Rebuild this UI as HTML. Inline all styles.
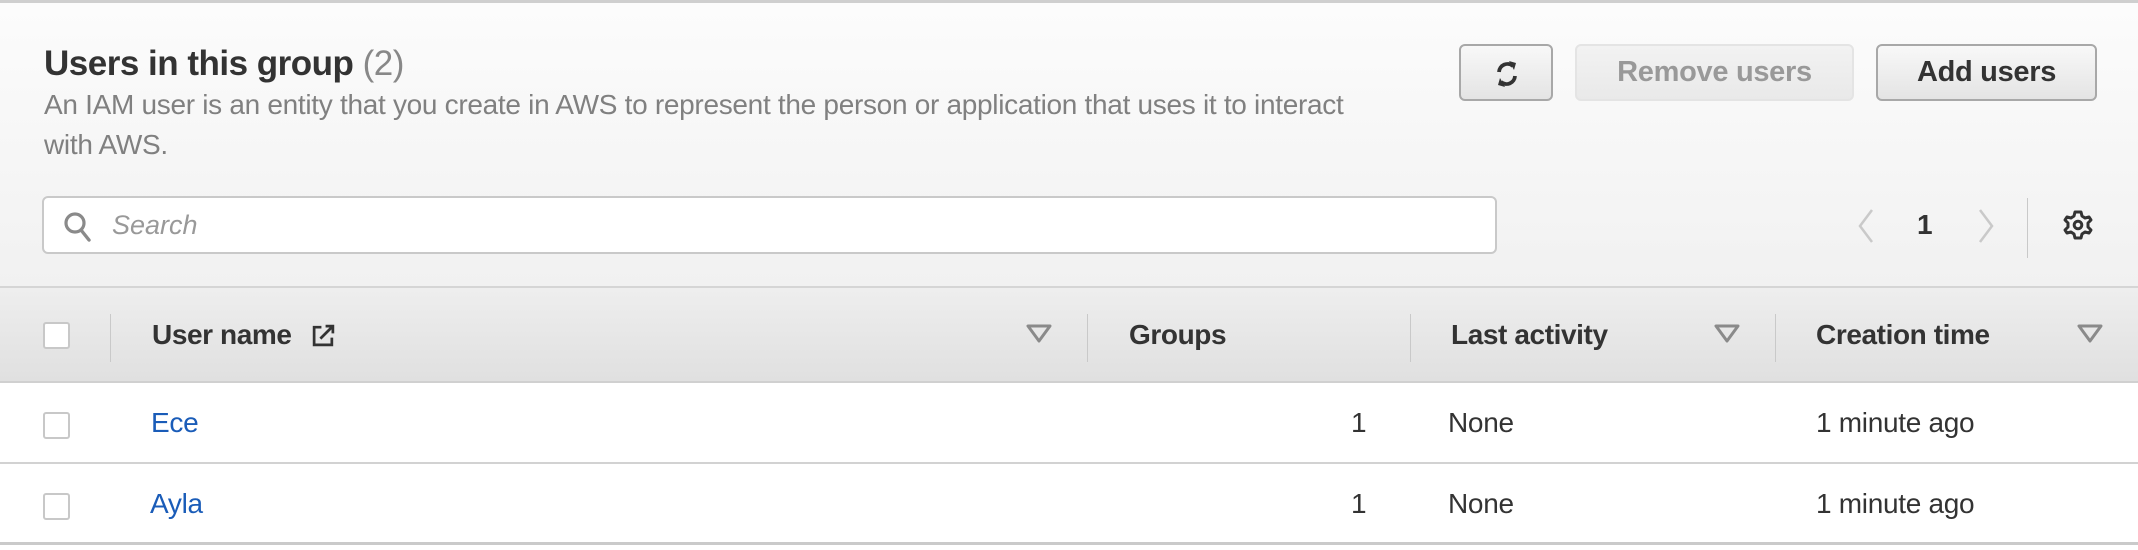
<!DOCTYPE html>
<html><head><meta charset="utf-8"><style>
*{box-sizing:border-box;margin:0;padding:0}
body{width:2138px;height:550px;overflow:hidden;font-family:"Liberation Sans",Arial,sans-serif;background:#fff;position:relative}
.top{position:absolute;left:0;top:0;width:2138px;height:286px;background:linear-gradient(#fcfcfc,#f1f1f1);border-top:3px solid #cfcfcf}
.abs{position:absolute}
h1{position:absolute;left:44px;top:44px;font-size:35px;font-weight:bold;color:#333;letter-spacing:-0.5px}
h1 span{font-weight:normal;color:#888}
.desc{position:absolute;left:44px;top:85px;width:1400px;font-size:28px;line-height:40px;color:#808080;letter-spacing:-0.3px}
.search{position:absolute;left:42px;top:196px;width:1455px;height:58px;background:#fff;border:2px solid #c9c9c9;border-radius:6px}
.search i{position:absolute;left:68px;top:12px;font-size:27px;color:#999;font-style:italic}
.btn{position:absolute;top:44px;height:57px;border:2px solid #a8a8a8;border-radius:6px;background:linear-gradient(#f8f8f8,#e4e4e4);font-size:29px;font-weight:bold;color:#333;text-align:center;line-height:53px;letter-spacing:-0.3px}
.btn.dis{border-color:#e4e4e4;background:linear-gradient(#f2f2f2,#e9e9e9);color:#999}
.hdr{position:absolute;left:0;top:286px;width:2138px;height:97px;background:linear-gradient(#eeeeee,#e0e0e0);border-top:2px solid #d5d5d5;border-bottom:2px solid #d0d0d0}
.th{position:absolute;top:31px;font-size:28px;font-weight:bold;color:#333;letter-spacing:-0.4px}
.div{position:absolute;top:26px;width:1px;height:48px;background:#c9c9c9}
.tri{position:absolute;top:36px}
.cb{position:absolute;left:43px;width:27px;height:27px;border:2px solid #c8c8c8;border-radius:3px;background:#fff}
.row{position:absolute;left:0;width:2138px;height:81px;border-bottom:2px solid #d2d2d2;background:#fff}
.td{position:absolute;top:24px;font-size:28px;color:#333;letter-spacing:-0.3px}
.lnk{color:#1a5cb8}
</style></head><body>
<div class="top"></div>
<h1>Users in this group <span>(2)</span></h1>
<div class="desc">An IAM user is an entity that you create in AWS to represent the person or application that uses it to interact<br>with AWS.</div>
<div class="search">
<svg class="abs" style="left:20px;top:13px" width="28" height="32" viewBox="0 0 28 32"><circle cx="11" cy="12" r="9" fill="none" stroke="#8a8a8a" stroke-width="3.2"/><path d="M17 19l8 10" stroke="#8a8a8a" stroke-width="3.4" stroke-linecap="round"/></svg>
<i>Search</i></div>
<div class="btn" style="left:1459px;width:94px">
<svg class="abs" style="left:33px;top:12px" width="26" height="32" viewBox="0 0 26 32"><path d="M5 14A8.5 8.5 0 0 1 19 8" fill="none" stroke="#333" stroke-width="3.8"/><path d="M15 3l7 2-2 7z" fill="#333"/><path d="M21 18A8.5 8.5 0 0 1 7 24" fill="none" stroke="#333" stroke-width="3.8"/><path d="M11 29l-7-2 2-7z" fill="#333"/></svg></div>
<div class="btn dis" style="left:1575px;width:279px">Remove users</div>
<div class="btn" style="left:1876px;width:221px">Add users</div>
<svg class="abs" style="left:1856px;top:208px" width="20" height="36" viewBox="0 0 20 36"><path d="M16 2L4 18l12 16" fill="none" stroke="#c9c9c9" stroke-width="2.5"/></svg>
<div class="abs" style="left:1917px;top:209px;font-size:28px;font-weight:bold;color:#333">1</div>
<svg class="abs" style="left:1976px;top:208px" width="20" height="36" viewBox="0 0 20 36"><path d="M4 2l12 16L4 34" fill="none" stroke="#c9c9c9" stroke-width="2.5"/></svg>
<div class="abs" style="left:2027px;top:198px;width:1px;height:60px;background:#c9c9c9"></div>
<svg class="abs" style="left:2062px;top:209px" width="32" height="32" viewBox="0 0 32 32"><path d="M16 3l3 0 1 4 3 2 4-1 2 3-3 3v4l3 3-2 3-4-1-3 2-1 4h-6l-1-4-3-2-4 1-2-3 3-3v-4l-3-3 2-3 4 1 3-2 1-4z" fill="none" stroke="#333" stroke-width="3" stroke-linejoin="round"/><circle cx="16" cy="16" r="3.8" fill="none" stroke="#333" stroke-width="3"/></svg>
<div class="hdr">
<div class="cb" style="top:34px"></div>
<div class="div" style="left:110px"></div>
<div class="th" style="left:152px">User name</div>
<svg class="abs" style="left:311px;top:35px" width="25" height="25" viewBox="0 0 24 24"><path d="M10 4H3v17h17v-7" fill="none" stroke="#333" stroke-width="2.6"/><path d="M9 15L21 3M14 3h7v7" fill="none" stroke="#333" stroke-width="2.6"/></svg>
<svg class="tri" style="left:1026px" width="26" height="20" viewBox="0 0 26 20"><path d="M2 2h22L13 17z" fill="none" stroke="#8a8a8a" stroke-width="3" stroke-linejoin="round"/></svg>
<div class="div" style="left:1087px"></div>
<div class="th" style="left:1129px">Groups</div>
<div class="div" style="left:1410px"></div>
<div class="th" style="left:1451px">Last activity</div>
<svg class="tri" style="left:1714px" width="26" height="20" viewBox="0 0 26 20"><path d="M2 2h22L13 17z" fill="none" stroke="#8a8a8a" stroke-width="3" stroke-linejoin="round"/></svg>
<div class="div" style="left:1775px"></div>
<div class="th" style="left:1816px">Creation time</div>
<svg class="tri" style="left:2077px" width="26" height="20" viewBox="0 0 26 20"><path d="M2 2h22L13 17z" fill="none" stroke="#8a8a8a" stroke-width="3" stroke-linejoin="round"/></svg>
</div>
<div class="row" style="top:383px">
<div class="cb" style="top:29px"></div>
<div class="td lnk" style="left:151px">Ece</div>
<div class="td" style="left:1351px">1</div>
<div class="td" style="left:1448px">None</div>
<div class="td" style="left:1816px">1 minute ago</div>
</div>
<div class="row" style="top:464px;border-bottom:3px solid #cacaca">
<div class="cb" style="top:29px"></div>
<div class="td lnk" style="left:150px">Ayla</div>
<div class="td" style="left:1351px">1</div>
<div class="td" style="left:1448px">None</div>
<div class="td" style="left:1816px">1 minute ago</div>
</div>
</body></html>
